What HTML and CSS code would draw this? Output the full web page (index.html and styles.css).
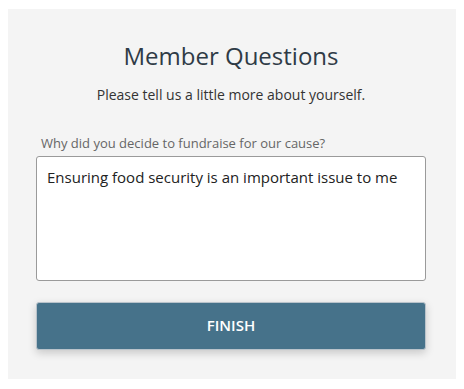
FILE: index.html
```html
<!DOCTYPE html>
<html>
<head>
<meta charset="utf-8">
<link rel="stylesheet" href="styles.css">
</head>
<body>
<div class="panel">
  <h1 class="title">Member Questions</h1>
  <p class="subtitle">Please tell us a little more about yourself.</p>
  <label class="label" for="q1">Why did you decide to fundraise for our cause?</label>
  <div class="answer" id="q1">Ensuring food security is an important issue to me</div>
  <button class="finish">FINISH</button>
</div>
</body>
</html>
```
FILE: styles.css
```css
html, body {
  margin: 0;
  padding: 0;
  background: #ffffff;
}
body {
  padding: 9px 8px 0 8px;
  font-family: "Open Sans", "Noto Sans", sans-serif;
}
.panel {
  background: #f4f4f4;
  width: 448px;
  box-sizing: border-box;
  padding: 31px 30px 29px 28px;
  display: flex;
  flex-direction: column;
}
.title {
  margin: 0;
  font-size: 24px;
  line-height: 32px;
  font-weight: 400;
  color: #2f3b46;
  text-align: center;
}
.subtitle {
  margin: 13px 0 0 0;
  font-size: 14px;
  line-height: 20px;
  color: #333333;
  text-align: center;
}
.label {
  margin: 29px 0 0 5px;
  font-size: 13px;
  line-height: 18px;
  color: #666666;
}
.answer {
  margin-top: 4px;
  height: 125px;
  box-sizing: border-box;
  border: 1px solid #9a9a9a;
  border-radius: 3px;
  background: #ffffff;
  padding: 9px 10px;
  font-size: 15px;
  line-height: 22px;
  color: #222222;
}
.finish {
  margin-top: 21px;
  height: 48px;
  box-sizing: border-box;
  border: 1px solid #b9c3cb;
  border-radius: 3px;
  background: #46728a;
  color: #ffffff;
  font-family: "Open Sans", "Noto Sans", sans-serif;
  font-size: 15px;
  font-weight: 600;
  box-shadow: 0 3px 8px rgba(0, 0, 0, 0.18);
  display: flex;
  align-items: center;
  justify-content: center;
  padding: 0 0 3px 0;
}
```
